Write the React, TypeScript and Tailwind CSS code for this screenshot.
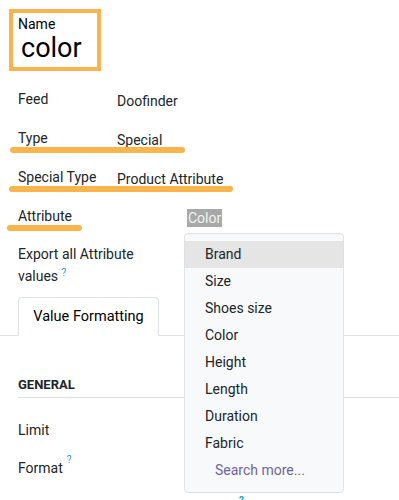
const options = ["Brand", "Size", "Shoes size", "Color", "Height", "Length", "Duration", "Fabric"];

interface FieldRowProps {
  label: string;
  value?: React.ReactNode;
  valueClass?: string;
  underline?: string;
}

function FieldRow({ label, value, valueClass = "ml-[99px]", underline }: FieldRowProps) {
  return (
    <div className="relative h-[39px] flex items-center pl-[18px]">
      <span className="w-[0px] whitespace-nowrap">{label}</span>
      <span className={`${valueClass} mt-[3px] whitespace-nowrap`}>{value}</span>
      {underline && (
        <span className={`absolute top-[28px] h-[6px] rounded-full bg-[#f9b44c] ${underline}`} />
      )}
    </div>
  );
}

function AttributeDropdown() {
  return (
    <div className="absolute left-[184px] top-[233px] w-[160px] h-[260px] bg-[#f8f9fa] border border-[#dee2e6] rounded-[4px] py-[7px]">
      {options.map((opt, i) => (
        <div
          key={opt}
          className={`h-[27px] flex items-center pl-[20px] text-[#212529] ${i === 0 ? "bg-[#e5e5e5]" : ""}`}
        >
          {opt}
        </div>
      ))}
      <div className="h-[27px] flex items-center pl-[30px] text-[#71639e]">Search more...</div>
    </div>
  );
}

export default function App() {
  return (
    <div className="relative w-[399px] h-[500px] overflow-hidden bg-white font-['Roboto',sans-serif] text-[14px] text-[#212529]">
      {/* Name box */}
      <div className="ml-[9px] mt-[9px] w-[92px] h-[62px] border-4 border-[#fbb24f] pl-[5px] pt-[2px]">
        <div className="text-[14px] leading-[18px] text-black">Name</div>
        <div className="text-[27px] leading-[30px] pl-[3px] text-black">color</div>
      </div>

      <div className="h-[9px]" />
      <FieldRow label="Feed" value="Doofinder" />
      <FieldRow label="Type" value="Special" underline="left-[10px] w-[175px]" />
      <FieldRow label="Special Type" value="Product Attribute" underline="left-[9px] w-[224px]" />
      <FieldRow
        label="Attribute"
        valueClass="ml-[169px] -mt-[1px]"
        value={<span className="bg-[#a8a8a8] text-[#f2f2f2] px-[1px] py-[1px]">Color</span>}
        underline="left-[7px] w-[75px]"
      />

      {/* Export all attribute values */}
      <div className="pl-[18px] pt-[7px] leading-[22px]">
        <div>Export all Attribute</div>
        <div>
          values <sup className="text-[#17a2b8] text-[10px]">?</sup>
        </div>
      </div>

      {/* Tabs */}
      <div className="mt-[10px] border-b border-[#dee2e6] h-[39px] flex">
        <div className="ml-[18px] w-[141px] h-[39px] border border-b-white border-[#dee2e6] rounded-t-[4px] bg-white flex items-center justify-center text-[14.5px] text-black">
          Value Formatting
        </div>
      </div>

      {/* General section */}
      <div className="pl-[18px] pt-[41px]">
        <div className="text-[13px] font-bold leading-[16px] pb-[4px] border-b border-[#dee2e6]">GENERAL</div>
        <div className="h-[38px] mt-[13px] flex items-center">Limit</div>
        <div className="h-[38px] flex items-center">
          Format <sup className="text-[#17a2b8] text-[10px] ml-[4px] -mt-[6px]">?</sup>
        </div>
      </div>

      <AttributeDropdown />
      <span className="absolute left-[239px] top-[493px] text-[#17a2b8] text-[10px] font-bold">?</span>
    </div>
  );
}
